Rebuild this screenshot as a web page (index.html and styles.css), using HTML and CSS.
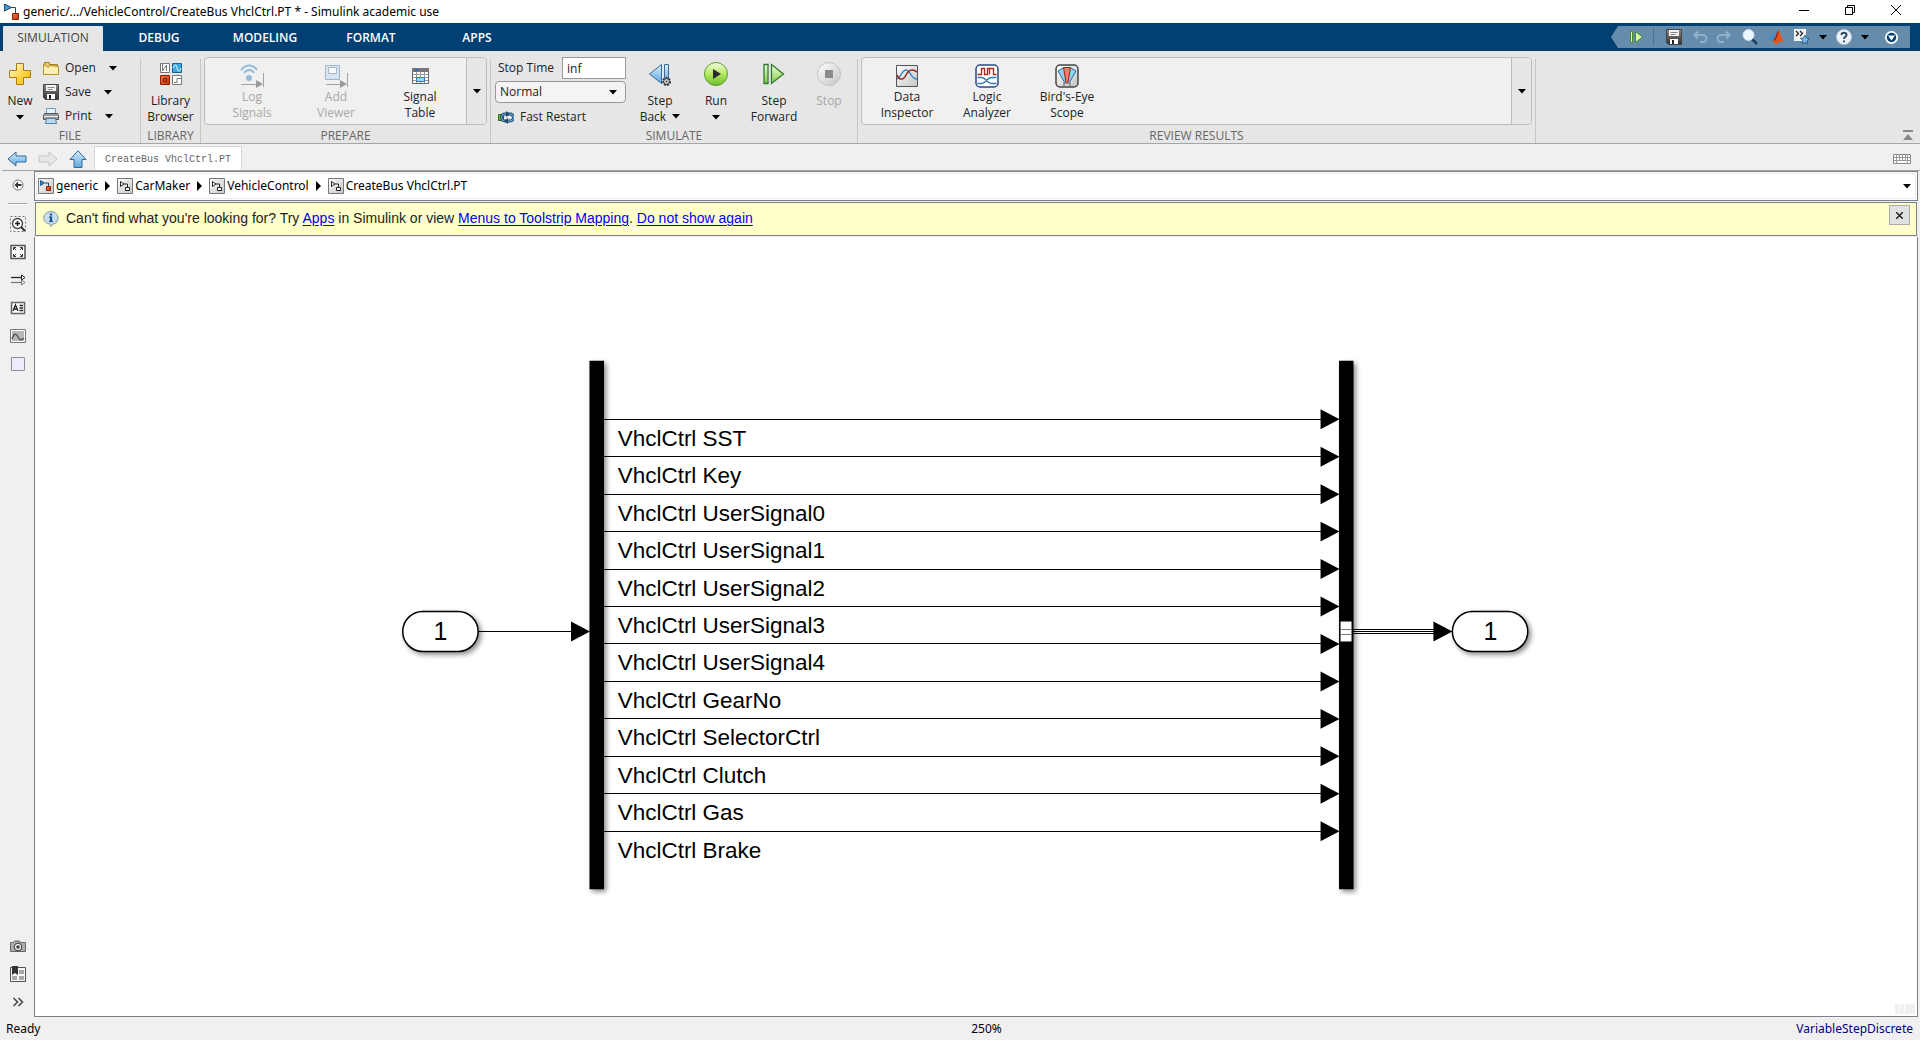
FILE: index.html
```html
<!DOCTYPE html>
<html lang="en">
<head>
<meta charset="utf-8">
<title>generic/.../VehicleControl/CreateBus VhclCtrl.PT * - Simulink academic use</title>
<link rel="stylesheet" href="styles.css">
</head>
<body>
<svg class="defs" aria-hidden="true">
  <defs>
    <linearGradient id="gold" x1="0" y1="0" x2="1" y2="1"><stop offset="0" stop-color="#fffbe0"/><stop offset=".6" stop-color="#ffd23c"/><stop offset="1" stop-color="#f0ae10"/></linearGradient>
    <linearGradient id="blue" x1="0" y1="0" x2="0" y2="1"><stop offset="0" stop-color="#d8efff"/><stop offset="1" stop-color="#5ea6dd"/></linearGradient>
    <linearGradient id="green" x1="0" y1="0" x2="0" y2="1"><stop offset="0" stop-color="#eaffd8"/><stop offset="1" stop-color="#86cc4a"/></linearGradient>
    <linearGradient id="run" x1="0" y1="0" x2="0" y2="1"><stop offset="0" stop-color="#f4ffe0"/><stop offset=".5" stop-color="#b4e860"/><stop offset="1" stop-color="#6cc02c"/></linearGradient>
    <linearGradient id="grey" x1="0" y1="0" x2="1" y2="1"><stop offset="0" stop-color="#ffffff"/><stop offset="1" stop-color="#c4c4c4"/></linearGradient>
    <linearGradient id="orange" x1="0" y1="0" x2="1" y2="1"><stop offset="0" stop-color="#f47a40"/><stop offset="1" stop-color="#c03008"/></linearGradient>
    <linearGradient id="steel" x1="0" y1="0" x2="0" y2="1"><stop offset="0" stop-color="#8a8a8a"/><stop offset="1" stop-color="#2e2e2e"/></linearGradient>
    <filter id="shadow" x="-20%" y="-20%" width="150%" height="150%"><feDropShadow dx="1" dy="1" stdDeviation="1" flood-color="#000" flood-opacity=".45"/></filter>
    <symbol id="caret" viewBox="0 0 8 5"><path d="M0 0h8L4 4.500z"/></symbol>
    <symbol id="crumb" viewBox="0 0 5 10"><path d="M0 0l5 5-5 5z"/></symbol>
    <symbol id="floppy" viewBox="0 0 16 16"><path fill="url(#steel)" stroke="#444" d="M.5.5h15v15h-13l-2-2z"/><path fill="#f2f2f2" d="M3 1h10v6H3z"/><path stroke="#888" d="M4.500 3.500h7m-7 2h5"/><path fill="#fff" d="M4 10h8v5H4z"/><path fill="#222" d="M6 11h2v4H6z"/></symbol>
    <symbol id="block" viewBox="0 0 16 16"><path fill="url(#grey)" stroke="#777" d="M.5.5h15v15H.5z"/><path fill="#fff" stroke="#222" d="M3.500 3.500v5l3.500-2.500zM7 6h3.500v3M8.500 9.500h4v3h-4z"/></symbol>
    <symbol id="stepfwd" viewBox="0 0 22 22"><path fill="url(#green)" stroke="#2f7a2f" stroke-width="1.300" d="M1 1.500h4v19H1zM8.500 1.500v19L20.500 11z"/></symbol>
    <symbol id="arrowleft" viewBox="0 0 20 16"><path d="M1 8l8-7v4h10v6H9v4z"/></symbol>
  </defs>
</svg>
<div class="app">
  <header class="titlebar">
    <svg class="i16" viewBox="0 0 16 16"><path fill="#3aa0dc" stroke="#246" d="M1.500 0v7l7-3.500z"/><path stroke="#246" fill="none" d="M8 3.500h4.500V9"/><path fill="url(#orange)" stroke="#8a2000" d="M9.500 9.500h6v6h-6z"/></svg>
    <h1>generic/.../VehicleControl/CreateBus VhclCtrl.PT * - Simulink academic use</h1>
    <div class="winbtns">
      <button aria-label="Minimize"><svg width="10" height="10" viewBox="0 0 10 10"><path stroke="#000" d="M0 5.500h10"/></svg></button>
      <button aria-label="Restore"><svg width="10" height="10" viewBox="0 0 10 10"><path fill="none" stroke="#000" d="M.5 2.500h7v7h-7zM2.500 2V.5h7v7H8"/></svg></button>
      <button aria-label="Close"><svg width="10" height="10" viewBox="0 0 10 10"><path stroke="#000" d="M0 0l10 10M10 0L0 10"/></svg></button>
    </div>
  </header>

  <nav class="ribbon">
    <button class="tab active">SIMULATION</button>
    <button class="tab">DEBUG</button>
    <button class="tab">MODELING</button>
    <button class="tab">FORMAT</button>
    <button class="tab">APPS</button>
    <div class="quick">
      <button aria-label="Step"><svg width="13" height="12" viewBox="0 0 13 12"><path fill="#d8f4b0" stroke="#4a8a30" d="M.5.5h2v11h-2zM5.500.5v11l7-5.500z"/></svg></button>
      <span class="qsep"></span>
      <button class="wide" aria-label="Save"><svg class="i16"><use href="#floppy"/></svg></button>
      <button aria-label="Undo"><svg class="i16" viewBox="0 0 16 16"><path fill="none" stroke="#8fb2cf" stroke-width="2" d="M6 2.500L2.500 6 6 9.500M3 6h8a3.500 3.500 0 0 1 0 7H8"/></svg></button>
      <button aria-label="Redo"><svg class="i16" viewBox="0 0 16 16"><path fill="none" stroke="#8fb2cf" stroke-width="2" d="M10 2.500L13.500 6 10 9.500M13 6H5a3.500 3.500 0 0 0 0 7h3"/></svg></button>
      <button class="wide" aria-label="Search"><svg class="i16" viewBox="0 0 16 16"><path stroke="#173f66" stroke-width="2.500" d="M10 10l5 5"/><circle cx="6.500" cy="6" r="5.500" fill="#eef7ff" stroke="#c9dcec"/></svg></button>
      <button aria-label="MATLAB"><svg class="i16" viewBox="0 0 16 16"><path fill="#3d8fd0" d="M0 9l5-3 5-5-4 9-2 2z"/><path fill="#e0561c" d="M4 12c3-1 4-9 6.500-11 2 2 3 8 5.500 12-3-1-5-1-8 3-1-2-2-3-4-4z"/><path fill="#8a2408" d="M10.500 1c-2 3-2 7-5 10l1 1c2-2 4-7 4-11z"/></svg></button>
      <button class="wide" aria-label="Favorites"><svg class="i16" viewBox="0 0 16 16"><path fill="#f4f4f4" d="M0 0h12v12H0z"/><path fill="none" stroke="#222" stroke-width="1.300" d="M2 2l2.500 2.500L2 7m4-5l2.500 2.500L6 7"/><path fill="#7fb4e4" stroke="#2c5f94" d="M11 6l1.500 3 3 .300-2.300 2.200.7 3.500-2.900-1.700L8 15l.7-3.500L6.500 9.300l3-.3z"/></svg></button>
      <button class="mini" aria-label="Favorites menu"><svg class="caret"><use href="#caret"/></svg></button>
      <button class="wide" aria-label="Help"><svg class="i16" viewBox="0 0 16 16"><circle cx="8" cy="8" r="7.500" fill="#eef2f6" stroke="#b8c8d8"/><path fill="none" stroke="#2b4a68" stroke-width="2" d="M5.500 6c0-3 5-3 5 0 0 1.800-2.500 1.800-2.500 4M8 11.500v1.800"/></svg></button>
      <button class="mini" aria-label="Help menu"><svg class="caret"><use href="#caret"/></svg></button>
      <button class="last" aria-label="More"><svg width="13" height="13" viewBox="0 0 13 13"><circle cx="6.500" cy="6.500" r="6.500" fill="#fff"/><circle cx="6.500" cy="6.500" r="4.700" fill="#004073"/><path fill="#fff" d="M3 4.500h7l-3.500 5z"/></svg></button>
    </div>
  </nav>

  <div class="toolstrip">
    <section class="group file">
      <div class="body">
        <button class="big"><svg class="i24" viewBox="0 0 24 24"><path fill="url(#gold)" stroke="#a87c10" d="M8.500 1.500h7v7h7v7h-7v7h-7v-7h-7v-7h7z"/></svg><span>New</span><svg class="caret drop"><use href="#caret"/></svg></button>
        <div class="rows">
          <div class="row"><button><svg class="i16" viewBox="0 0 16 16"><path fill="#e8c860" stroke="#a08020" d="M.5 4.500h1v-2h5v2h8v10H.5z"/><path fill="#fff0b0" stroke="#b09030" d="M5.500 14.500h10v-8l-9-1-1 2-5-3v10z"/></svg>Open</button><button aria-label="Open menu"><svg class="caret"><use href="#caret"/></svg></button></div>
          <div class="row"><button><svg class="i16"><use href="#floppy"/></svg>Save</button><button aria-label="Save menu"><svg class="caret"><use href="#caret"/></svg></button></div>
          <div class="row"><button><svg class="i16" viewBox="0 0 16 16"><path fill="#e8f4ff" stroke="#7098b8" d="M3.500.5h9v6h-9z"/><path fill="#9a9a9a" stroke="#555" d="M1.500 5.500h13l1 2v4H.5v-4z"/><path stroke="#eee" d="M1 8.500h14"/><path fill="#b8dcf8" stroke="#5580a0" d="M3.500 10.500h9l1 5h-11z"/></svg>Print</button><button aria-label="Print menu"><svg class="caret"><use href="#caret"/></svg></button></div>
        </div>
      </div>
      <h2>FILE</h2>
    </section>
    <span class="sep"></span>
    <section class="group library">
      <div class="body">
        <button class="big"><svg class="i24" viewBox="0 0 24 24"><path fill="#fff" stroke="#777" d="M1.500 1.500h9v9h-9zM13.500 13.500h9v9h-9z"/><path fill="none" stroke="#777" d="M3.500 2v7M3.500 9l4-6v6M15 20.500h3v-4h4"/><path fill="#3aa8e4" stroke="#1a6090" d="M13.500 1.500h9v9h-9z"/><path fill="none" stroke="#fff" d="M14 6c2-4 3-4 4 0s3 4 4 0"/><path fill="url(#orange)" stroke="#8a2000" d="M1.500 13.500h9v9h-9z"/><path fill="none" stroke="#701800" d="M4.500 16.500h3v3h-3z"/></svg><span>Library<br>Browser</span></button>
      </div>
      <h2>LIBRARY</h2>
    </section>
    <span class="sep"></span>
    <section class="group prepare">
      <div class="body gallery">
        <div class="items">
          <button disabled><svg class="i24" viewBox="0 0 24 24"><g opacity=".55"><path fill="none" stroke="#4a90c8" stroke-width="2" d="M1 6c5-6 12-6 16 0M4 9c3-4 8-4 10 0"/><circle cx="9" cy="14" r="3" fill="#4a90c8"/><path stroke="#666" d="M1 20.500h16M23.500 9v14"/><path fill="#555" d="M16 16v8l7-4z"/></g></svg><span>Log<br>Signals</span></button>
          <button disabled><svg class="i24" viewBox="0 0 24 24"><g opacity=".55"><path fill="#c4dcf0" stroke="#6888a8" d="M1.500 1.500h14v14h-14z"/><path fill="#fff" stroke="#6888a8" d="M4.500 3.500h8v6h-8z"/><path stroke="#666" d="M2 20.500h15M23.500 9v14"/><path fill="#555" d="M16 16v8l7-4z"/></g></svg><span>Add<br>Viewer</span></button>
          <button><svg class="i24" viewBox="0 0 24 24"><path fill="#fff" stroke="#666" d="M4.500 4.500h16v15h-16z"/><path fill="#777" d="M4 4h17v4H4z"/><path fill="#1e6bd0" d="M7 5h3v2H7z"/><path stroke="#999" d="M5 10.500h15M5 13.500h15M5 16.500h15M8.500 8v11M12.500 8v11M16.500 8v11"/><path fill="#9fd0ff" stroke="#1e7be0" d="M8.500 13.500h8v4h-8z"/></svg><span>Signal<br>Table</span></button>
        </div>
        <button class="more" aria-label="Show more"><svg class="caret"><use href="#caret"/></svg></button>
      </div>
      <h2>PREPARE</h2>
    </section>
    <span class="sep"></span>
    <section class="group simulate">
      <div class="body">
        <div class="settings">
          <div class="field"><label for="stop">Stop Time</label><input id="stop" type="text" value="inf"></div>
          <div class="pick"><select aria-label="Simulation mode"><option>Normal</option></select><svg class="caret"><use href="#caret"/></svg></div>
          <button class="fast"><svg class="i16" viewBox="0 0 16 16"><path fill="#6cc030" stroke="#2a6a10" d="M.5 5.500h5v6h-5z"/><path fill="none" stroke="#1e4a70" stroke-width="3" d="M8 12H7a3.500 3.500 0 0 1 0-7h2M9 5h3a3.500 3.500 0 0 1 0 7h-2"/><path fill="none" stroke="#7ab8e8" d="M8 12H7a3.500 3.500 0 0 1 0-7h2M9 5h3a3.500 3.500 0 0 1 0 7h-2"/><path fill="#1e4a70" d="M8 2l4 3-4 3zM10 9v6l-4-3z"/></svg>Fast Restart</button>
        </div>
        <button class="big w60"><svg class="i24" viewBox="0 0 24 24"><path fill="url(#blue)" stroke="#3a6a94" d="M13.500 2.500v19L1.500 12zM16.500 2.500h4v14h-4z"/><circle cx="18.500" cy="19.500" r="3.500" fill="#eee" stroke="#333" stroke-width="2" stroke-dasharray="2 1"/><circle cx="18.500" cy="19.500" r="2.800" fill="#eee" stroke="#333"/><circle cx="18.500" cy="19.500" r="1" fill="#333"/></svg><span>Step<br>Back <svg class="caret inline"><use href="#caret"/></svg></span></button>
        <button class="big w52"><svg class="i24" viewBox="0 0 24 24"><circle cx="12" cy="12" r="11.500" fill="url(#run)" stroke="#5a9a30"/><path fill="#2b2b2b" d="M9 7v10l8-5z"/></svg><span>Run</span><svg class="caret drop"><use href="#caret"/></svg></button>
        <button class="big w64"><svg class="i24" viewBox="-1 -1 24 24"><use href="#stepfwd" width="22" height="22"/></svg><span>Step<br>Forward</span></button>
        <button class="big w46" disabled><svg class="i24" viewBox="0 0 24 24"><circle cx="12" cy="12" r="11.500" fill="url(#grey)" stroke="#c0c0c0"/><path fill="#8c8c8c" d="M8 8h8v8H8z"/></svg><span>Stop</span></button>
      </div>
      <h2>SIMULATE</h2>
    </section>
    <span class="sep"></span>
    <section class="group review">
      <div class="body gallery">
        <div class="items">
          <button><svg class="i24" viewBox="0 0 24 24"><path fill="url(#grey)" stroke="#555" d="M1.500 1.500h21v21h-21z"/><path fill="none" stroke="#3a88c8" stroke-width="1.500" d="M2 15c3 0 5-9 9-9s5 9 11 9"/><path fill="none" stroke="#a02018" stroke-width="1.500" d="M2 11c2 5 6 6 9 0s7-6 11-3"/></svg><span>Data<br>Inspector</span></button>
          <button><svg class="i24" viewBox="0 0 24 24"><rect x="1" y="1" width="22" height="22" rx="4" fill="#fff" stroke="#2a4a80" stroke-width="1.500"/><path fill="none" stroke="#b02018" stroke-width="1.300" d="M2.500 10.500h4v-6h3v6h3v-6h2v6M14.500 4.500h4v6h3"/><path fill="none" stroke="#3078b8" stroke-width="1.300" d="M2.500 13.500h4c5 0 5 6 10 6h5M2.500 19.500h4c5 0 5-6 10-6h5"/></svg><span>Logic<br>Analyzer</span></button>
          <button><svg class="i24" viewBox="0 0 24 24"><rect x="1" y="1" width="22" height="22" rx="4" fill="url(#grey)" stroke="#444" stroke-width="1.500"/><path fill="#90d0f4" stroke="#2070a8" d="M3 7l5-3h8l5 3-7 12h-4z"/><path fill="#e88070" stroke="#b01810" d="M8.500 3.500h7L13 18.500h-2z"/><path fill="none" stroke="#888" stroke-width="1.500" d="M9 22v-3h6v3"/></svg><span>Bird's-Eye<br>Scope</span></button>
        </div>
        <button class="more" aria-label="Show more"><svg class="caret"><use href="#caret"/></svg></button>
      </div>
      <h2>REVIEW RESULTS</h2>
    </section>
    <span class="sep"></span>
    <button class="collapse" aria-label="Minimize toolstrip"><svg width="10" height="10" viewBox="0 0 10 10"><path fill="#888" d="M0 0h10v2H0zM5 4l5 6H0z"/></svg></button>
  </div>

  <div class="navbar">
    <button aria-label="Back"><svg width="20" height="16"><use href="#arrowleft" fill="url(#blue)" stroke="#2f6a98"/></svg></button>
    <button aria-label="Forward" disabled><svg class="flip" width="20" height="16"><use href="#arrowleft" fill="#e8e8e8" stroke="#c4c4c4"/></svg></button>
    <button aria-label="Up"><svg width="18" height="18" viewBox="0 0 18 18"><path fill="url(#blue)" stroke="#2f6a98" d="M9 .8l8 8.700h-4v8H5v-8H1z"/></svg></button>
    <button class="doctab">CreateBus VhclCtrl.PT</button>
    <button class="keys" aria-label="Keyboard shortcuts"><svg width="18" height="10" viewBox="0 0 18 10"><path fill="#fff" stroke="#888" d="M.5.5h17v9H.5z"/><path stroke="#999" d="M1 3.500h16M1 6.500h16M3.500 1v8M6.500 1v5M9.500 1v5M12.500 1v5M14.500 1v8"/></svg></button>
  </div>

  <div class="work">
    <aside class="palette">
      <button aria-label="Hide"><svg class="i16" viewBox="0 0 16 16"><circle cx="8" cy="8" r="5" fill="#fff" stroke="#777"/><path fill="#333" d="M4.500 8L8 4.500V7h3.500v2H8v2.500z"/></svg></button>
      <hr>
      <button aria-label="Zoom"><svg class="i16" viewBox="0 0 16 16"><path fill="none" stroke="#777" stroke-dasharray="2 2" d="M.5.5h15v15H.5z"/><circle cx="7.500" cy="7.500" r="5" fill="#fff" stroke="#444" stroke-width="1.300"/><path stroke="#333" stroke-width="2" d="M11 11l4 4"/><path stroke="#222" stroke-width="1.500" d="M5 7.500h5M7.500 5v5"/></svg></button>
      <button aria-label="Fit to view"><svg class="i16" viewBox="0 0 16 16"><path fill="#f8f8f8" stroke="#555" stroke-width="1.500" d="M1 1.500h14v13H1z"/><path fill="none" stroke="#333" d="M3.500 6V3.500H6M4 4l2 2M10 3.500h2.500V6M12 4l-2 2M3.500 10v2.500H6M4 12l2-2M10 12.500h2.500V10M12 12l-2-2"/></svg></button>
      <button aria-label="Sample time display"><svg class="i16" viewBox="0 0 16 16"><path stroke="#222" stroke-width="1.300" d="M1 5.500h12"/><path stroke="#777" stroke-width="1.300" d="M1 10.500h12"/><path fill="#fff" stroke="#222" d="M11.500 3v5l3.500-2.500z"/><path fill="#fff" stroke="#777" d="M11.500 8v5l3.500-2.500z"/></svg></button>
      <button aria-label="Annotation"><svg class="i16" viewBox="0 0 16 16"><path fill="#fff" stroke="#666" stroke-width="1.500" d="M1.500 2.500h13v11h-13z"/><path fill="none" stroke="#222" stroke-width="1.300" d="M3 11l2.500-6L8 11M4 9h3M9.500 5.500H13M9.500 8H13M9.500 10.500H13"/></svg></button>
      <button aria-label="Image"><svg class="i16" viewBox="0 0 16 16"><path fill="#fff" stroke="#777" d="M.5 1.500h15v13H.5z"/><path fill="#b8b8b8" d="M2 3h12v10H2z"/><path fill="none" stroke="#555" stroke-width="1.500" d="M2 11c2-6 4-6 6-2s4 3 6 1"/></svg></button>
      <button aria-label="Area"><svg class="i16" viewBox="0 0 16 16"><path fill="#ececfc" stroke="#8c8c9c" d="M1.500 1.500h13v13h-13z"/></svg></button>
      <button class="push" aria-label="Screenshot"><svg class="i16" viewBox="0 0 16 16"><path fill="#b0b0b0" stroke="#666" d="M.5 4.500h3l1-1.500h5l1 1.500h5v9H.5z"/><circle cx="8" cy="9" r="3.800" fill="#eee" stroke="#333"/><circle cx="8" cy="9" r="1.800" fill="#444"/></svg></button>
      <button aria-label="Bookmarks"><svg class="i16" viewBox="0 0 16 16"><path fill="#f8f8f8" stroke="#555" d="M.5 1.500h15v14H.5z"/><path fill="#a8a8a8" d="M9 4h5v4H9zM9 10h5v4H9zM2 10h5v4H2z"/><path fill="#333" d="M2 0h6v9L5 7 2 9z"/></svg></button>
      <button aria-label="Expand"><svg class="i16" viewBox="0 0 16 16"><path fill="none" stroke="#444" stroke-width="1.500" d="M3.500 4l4 4-4 4M8.500 4l4 4-4 4"/></svg></button>
    </aside>
    <main class="editor">
      <div class="address">
        <div class="crumbs">
          <button><svg class="i16" viewBox="0 0 16 16"><path fill="url(#grey)" stroke="#777" d="M.5.5h15v15H.5z"/><path fill="#2a90d0" stroke="#1a5a88" d="M2.500 2.500v5l4-2.500z"/><path fill="none" stroke="#246" d="M7 5h3.500v3"/><path fill="url(#orange)" stroke="#8a2000" d="M8.500 8.500h4v4h-4z"/></svg>generic</button>
          <svg class="crumb"><use href="#crumb"/></svg>
          <button><svg class="i16"><use href="#block"/></svg>CarMaker</button>
          <svg class="crumb"><use href="#crumb"/></svg>
          <button><svg class="i16"><use href="#block"/></svg>VehicleControl</button>
          <svg class="crumb"><use href="#crumb"/></svg>
          <button><svg class="i16"><use href="#block"/></svg>CreateBus VhclCtrl.PT</button>
          <button class="history" aria-label="History"><svg class="caret"><use href="#caret"/></svg></button>
        </div>
      </div>
      <div class="notice">
        <svg class="i16" viewBox="0 0 16 16"><path fill="#c8dcf0" stroke="#8898a8" d="M8 .5c9 0 9 12 2 12.500L8 15.500 7 13C-1.500 12.500-1.500.5 8 .5z"/><path stroke="#14508c" stroke-width="2.200" d="M8 2.500v2M8 5.500v5"/><path stroke="#14508c" d="M6 6h2M6 10.500h4"/></svg>
        <p>Can't find what you're looking for? Try <a href="#apps">Apps</a> in Simulink or view <a href="#menus">Menus to Toolstrip Mapping</a>. <a href="#hide">Do not show again</a></p>
        <button aria-label="Close"><svg width="7" height="7" viewBox="0 0 7 7"><path stroke="#222" stroke-width="1.500" d="M0 0l7 7M7 0L0 7"/></svg></button>
      </div>
      <div class="canvas">
        <svg class="diagram" viewBox="0 0.400 752 312">
          <g class="wire">
            <path d="M176 158.400h45M227 73.400h290M227 88.400h290M227 103.400h290M227 118.400h290M227 133.400h290M227 148.400h290M227 163.400h290M227 178.400h290M227 193.400h290M227 208.400h290M227 223.400h290M227 238.400h290"/>
          </g>
          <g filter="url(#shadow)">
            <path d="M221.200 50h5.800v211.600h-5.800zM521.400 50h5.800v211.600h-5.800z"/>
          </g>
          <g class="port" filter="url(#shadow)">
            <rect x="146.400" y="150.400" width="30.200" height="16" rx="8"/>
            <rect x="566.800" y="150.400" width="30.200" height="16" rx="8"/>
          </g>
          <path fill="#fff" d="M522 154.400h4.400v8H522z"/>
          <g class="wire">
            <path d="M526.400 157.600h34M526.400 158.400h34M526.400 159.200h34"/>
            <path class="thin" d="M522 157.600h4.400M522 159.600h4.400"/>
          </g>
          <path d="M213.800 154.400v8l7.600-4zM559.200 154.400v8l7.600-4zM514 69.400v8l7.600-4zM514 84.400v8l7.600-4zM514 99.400v8l7.600-4zM514 114.400v8l7.600-4zM514 129.400v8l7.600-4zM514 144.400v8l7.600-4zM514 159.400v8l7.600-4zM514 174.400v8l7.600-4zM514 189.400v8l7.600-4zM514 204.400v8l7.600-4zM514 219.400v8l7.600-4zM514 234.400v8l7.600-4z"/>
          <g class="labels" transform="translate(232.500)">
            <text y="84">VhclCtrl SST</text>
            <text y="99">VhclCtrl Key</text>
            <text y="114">VhclCtrl UserSignal0</text>
            <text y="129">VhclCtrl UserSignal1</text>
            <text y="144">VhclCtrl UserSignal2</text>
            <text y="159">VhclCtrl UserSignal3</text>
            <text y="174">VhclCtrl UserSignal4</text>
            <text y="189">VhclCtrl GearNo</text>
            <text y="204">VhclCtrl SelectorCtrl</text>
            <text y="219">VhclCtrl Clutch</text>
            <text y="234">VhclCtrl Gas</text>
            <text y="249">VhclCtrl Brake</text>
          </g>
          <g class="numbers">
            <text x="161.500" y="162">1</text>
            <text x="582" y="162">1</text>
          </g>
        </svg>
        <div class="grip"><i></i><i></i><i></i></div>
      </div>
    </main>
  </div>

  <footer class="status">
    <span>Ready</span>
    <span class="zoom">250%</span>
    <a href="#solver">VariableStepDiscrete</a>
  </footer>
</div>
</body>
</html>
```
FILE: styles.css
```css
* { box-sizing: border-box; }
body { margin: 0; font: 12px/16px "Open Sans", "Noto Sans", sans-serif; color: #222; background: #f0f0f0; }
button { font: inherit; color: inherit; background: none; border: 0; padding: 0; margin: 0; display: flex; align-items: center; }
h1, h2, p { margin: 0; font: inherit; }
svg { display: block; flex: none; }
.defs { position: absolute; width: 0; height: 0; }
.i16 { width: 16px; height: 16px; }
.i24 { width: 24px; height: 24px; }
.caret { width: 8px; height: 5px; fill: #000; }
.crumb { width: 5px; height: 10px; fill: #000; }

.app { display: flex; flex-direction: column; height: 100vh; overflow: hidden; }
.titlebar, .crumbs, .status { font-family: "Noto Sans", "Open Sans", sans-serif; }

.titlebar { display: flex; align-items: center; height: 23px; padding-left: 3px; gap: 4px; background: #fff; color: #000; }
.winbtns { display: flex; align-self: flex-start; margin: 0 1px 0 auto; }
.winbtns button { width: 46px; height: 20px; justify-content: center; }

.ribbon { display: flex; align-items: flex-end; gap: 6px; height: 28px; padding-left: 3px; background: #004073; }
.tab { width: 100px; height: 25px; padding-bottom: 1px; justify-content: center; color: #fff; font-weight: 600; }
.tab.active { background: #e6e6e6; color: #444; font-weight: 400; border-radius: 1px 1px 0 0; }
.quick { display: flex; align-items: center; align-self: center; height: 22px; margin: 0 10px 0 auto; padding-left: 13px; background: #668cab; clip-path: polygon(0 50%, 7px 0, 100% 0, 100% 100%, 7px 100%); }
.quick button { width: 24px; height: 22px; justify-content: center; }
.quick .wide { width: 28px; }
.quick .mini { width: 14px; }
.quick .last { width: 38px; }
.qsep { width: 1px; height: 18px; margin: 0 6px 0 5px; background: #4a7296; }

.toolstrip { display: flex; height: 93px; background: #e6e6e6; border-bottom: 1px solid #a6a6a6; }
.sep { flex: none; width: 1px; margin-top: 8px; background: #c6c6c6; }
.group { display: flex; flex-direction: column; padding-top: 6px; }
.group h2 { padding-top: 3px; text-align: center; color: #666; }
.body { display: flex; flex: none; height: 68px; }
.file { width: 140px; }
.library { width: 59px; }
.prepare { width: 289px; padding-left: 3px; padding-right: 3px; }
.simulate { width: 366px; }
.review { flex: 0 1 677px; padding-left: 3px; padding-right: 3px; }
.big { flex-direction: column; height: 68px; padding-top: 5px; text-align: center; }
.big > span { margin-top: 7px; }
.file .big { width: 40px; }
.library .big { width: 59px; }
.drop { margin-top: 6px; }
.w60 { width: 60px; }
.w52 { width: 52px; }
.w64 { width: 64px; }
.w46 { width: 46px; }
.inline { display: inline-block; margin: 0 0 2px 3px; }
button:disabled { color: #a8a8a8; }
.rows { display: flex; flex-direction: column; margin-top: -1px; padding-left: 3px; }
.row { display: flex; flex: none; align-items: center; gap: 13px; height: 24px; }
.row button { gap: 6px; }

.gallery { border: 1px solid #bcbcbc; border-radius: 4px; background: #f0f0f0; overflow: hidden; }
.items { display: flex; flex: 1; padding-left: 5px; }
.items button { flex-direction: column; width: 84px; padding-top: 6px; gap: 1px; }
.review .items button { width: 80px; }
.more { width: 20px; justify-content: center; background: #e6e6e6; border-left: 1px solid #bcbcbc; }

.settings { width: 139px; padding: 0 4px; }
.field { display: flex; align-items: center; justify-content: space-between; height: 22px; padding-left: 3px; }
.field input { width: 64px; height: 22px; padding: 0 4px; border: 1px solid #999; background: #fff; font: inherit; color: #222; }
.pick { display: flex; align-items: center; margin-top: 2px; }
.pick select { appearance: none; width: 131px; height: 22px; padding: 0 4px; border: 1px solid #999; border-radius: 4px; background: #f4f4f4; font: inherit; color: #222; }
.pick .caret { margin-left: -17px; }
.fast { height: 24px; margin-top: 2px; padding-left: 3px; gap: 6px; }
.collapse { margin: auto 7px 3px auto; }

.navbar { display: flex; align-items: flex-end; gap: 11px; height: 27px; margin-left: 2px; padding-left: 5px; border-bottom: 1px solid #a6a6a6; }
.navbar button { height: 22px; }
.flip { transform: scaleX(-1); }
.navbar .doctab { width: 148px; height: 24px; margin-left: -4px; padding-top: 3px; justify-content: center; background: #fff; border: 1px solid #d8d8d8; border-bottom: 0; color: #666; font: 10px/16px "Liberation Mono", monospace; }
.navbar .keys { margin: 0 9px 0 auto; }

.work { display: flex; flex: 1; min-height: 0; }
.palette { display: flex; flex-direction: column; width: 34px; padding-bottom: 1px; }
.palette button { height: 28px; padding-left: 10px; }
.palette hr { width: 19px; height: 2px; margin: 4px 0 5px 8px; border: 0; border-top: 1px solid #a6a6a6; background: #fff; }
.palette .push { margin-top: auto; }
.editor { display: flex; flex-direction: column; flex: 1; min-width: 0; margin-right: 2px; }
.address { height: 30px; padding: 1px; background: #fff; border: 1px solid #7c8088; }
.crumbs { display: flex; align-items: center; height: 26px; padding-left: 1px; border: 1px solid #ececec; color: #000; gap: 7px; }
.crumbs button { gap: 2px; }
.crumbs .history { margin: 0 4px 0 auto; }
.notice { display: flex; align-items: center; height: 34px; margin: 1px 1px 0; padding: 0 6px 0 7px; border: 1px solid #7c8088; background: #ffffcc; color: #222; font: 14px/16px "Liberation Sans", Arial, sans-serif; }
.notice p { margin: 0 auto 2px 7px; }
.notice a { color: #00f; text-underline-offset: 2px; }
.notice button { width: 21px; height: 20px; justify-content: center; margin-bottom: 8px; background: #e1e1e1; border: 1px solid #adadad; }
.canvas { position: relative; flex: 1; min-height: 0; margin-top: 1px; background: #fff; border: 1px solid #7c8088; border-top: 0; }
.diagram { width: 100%; height: 100%; }
.wire { fill: none; stroke: #000; shape-rendering: crispEdges; }
.wire path { stroke-width: 1px; vector-effect: non-scaling-stroke; }
.wire .thin { stroke: #777; }
.port { fill: #fff; stroke: #000; stroke-width: .6; }
.labels { font: 9px "Liberation Sans", Arial, sans-serif; }
.numbers { font: 10px "Liberation Sans", Arial, sans-serif; text-anchor: middle; }
.grip { position: absolute; right: 2px; bottom: 2px; display: flex; gap: 1px; }
.grip i { width: 4px; height: 10px; background: #f0f0f0; }
.grip i:last-child { width: 10px; }

.status { display: grid; grid-template-columns: 1fr auto 1fr; align-items: center; height: 23px; padding: 0 7px 0 6px; color: #000; }
.status .zoom { padding-left: 54px; }
.status a { justify-self: end; color: #000080; text-decoration: none; }
```
